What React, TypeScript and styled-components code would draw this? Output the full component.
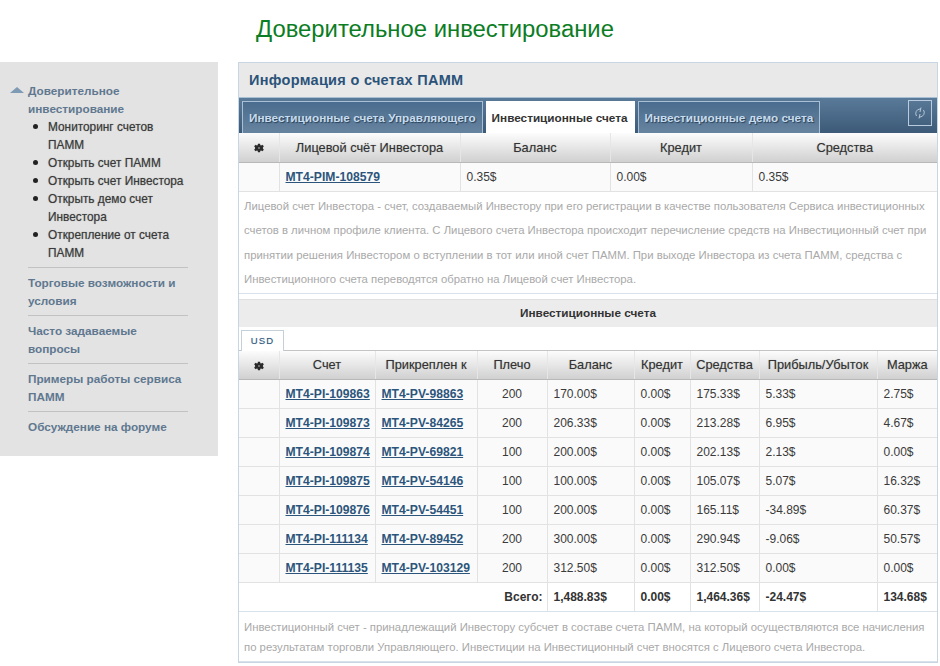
import React from "react";
import styled, { createGlobalStyle } from "styled-components";

const Global = createGlobalStyle`
  html, body { margin: 0; padding: 0; background: #fff; height: 666px; overflow: hidden; }
  body { font-family: "Liberation Sans", Arial, sans-serif; font-size: 12px; color: #333; }
`;
const Page = styled.div`width: 940px; height: 666px; overflow: hidden;`;
const Title = styled.h1`
  margin: 0; height: 62px; padding: 15px 0 0 256px; box-sizing: border-box;
  font-size: 23.85px; line-height: 28px; font-weight: 400; color: #0b7d24;
`;
const Columns = styled.div`display: flex; align-items: flex-start; gap: 20px;`;
const Sidebar = styled.nav`
  width: 218px; height: 394px; box-sizing: border-box; flex: none;
  background: #e3e3e3; padding: 14px 30px 0 28px;
`;
const TopItem = styled.div<{ $last?: boolean }>`
  position: relative; padding: 6px 0 5px;
  border-bottom: ${(p) => (p.$last ? "none" : "1px solid #c2c2c2")};
`;
const TopLabel = styled.div`
  position: relative; font-size: 11.75px; line-height: 18px; font-weight: 700; color: #5f7890;
`;
const Arrow = styled.svg`position: absolute; left: -18px; top: 5px;`;
const SubList = styled.ul`list-style: none; margin: 0; padding: 0 0 0 20px;`;
const SubItem = styled.li`
  position: relative; font-size: 11.85px; line-height: 18px; font-weight: 400; color: #3a3a3a;
  text-shadow: 0 0 1px rgba(0, 0, 0, 0.4);
  &::before {
    content: ""; position: absolute; left: -15px; top: 6px; width: 5px; height: 5px;
    border-radius: 50%; background: #222;
  }
`;
const Panel = styled.main`
  width: 700px; flex: none; box-sizing: border-box; height: 601px;
  border: 1px solid #c8d5e2; background: #fff;
`;
const PanelHead = styled.h2`
  margin: 0; height: 34px; box-sizing: border-box; padding: 9px 0 0 10px; background: #e9e9e9;
  font-size: 14.5px; line-height: 16px; font-weight: 700; color: #2b5379; letter-spacing: 0.3px;
`;
const TabBar = styled.div`
  position: relative; height: 36px; box-sizing: border-box; display: flex; align-items: flex-end;
  gap: 3px; padding-left: 3px;
  background: linear-gradient(#5a7a99, #3c5a78);
  border-top: 1px solid #a9bfd3;
`;
const Tab = styled.div<{ $active?: boolean }>`
  height: 32px; box-sizing: border-box; display: flex; align-items: center;
  font-size: 11.75px; font-weight: 700; white-space: nowrap;
  color: ${(p) => (p.$active ? "#333" : "#c6dcee")};
  background: ${(p) => (p.$active ? "#fff" : "linear-gradient(#4a6c8e, #67849f)")};
  border: ${(p) => (p.$active ? "none" : "1px solid #a9bfd3")};
  border-bottom: none;
  padding: ${(p) => (p.$active ? "0 7px 0 6px" : "0 6px")};
  text-shadow: ${(p) => (p.$active ? "none" : "1px 1px 1px rgba(20, 40, 60, 0.7)")};
`;
const RefreshBox = styled.div`
  position: absolute; right: 5px; top: 2px; width: 24px; height: 26px; box-sizing: border-box;
  border: 1px solid #b9cbdc; display: flex; align-items: center; justify-content: center;
`;
const Table = styled.table`
  width: 698px; table-layout: fixed; border-collapse: collapse; font-size: 12px;
`;
const HeadCell = styled.th`
  height: 29px; padding: 0; box-sizing: border-box; text-align: center; font-weight: 400;
  font-size: 12.8px; color: #333; text-shadow: 0 0 1px rgba(0, 0, 0, 0.3);
  background: linear-gradient(#fcfcfc, #d0d0d0); border-right: 1px solid #e6e6e6;
  border-bottom: 1px solid #b8b8b8; white-space: nowrap;
  &:last-child { border-right: none; }
`;
const Cell = styled.td<{ $center?: boolean }>`
  height: 29px; padding: ${(p) => (p.$center ? "0" : "0 0 0 6px")}; box-sizing: border-box; color: #3a3a3a;
  background: #fafafa; border-right: 1px solid #e2e2e2; border-bottom: 1px solid #e2e2e2;
  text-align: ${(p) => (p.$center ? "center" : "left")}; white-space: nowrap;
  &:last-child { border-right: none; }
`;
const LinkCell = styled(Cell)``;
const AccountLink = styled.a`
  font-size: 12.15px; font-weight: 700; color: #2c557c; text-decoration: underline; cursor: pointer;
`;
const Note = styled.p<{ $h: number; $lh: number; $top: number }>`
  margin: 0; height: ${(p) => p.$h}px; box-sizing: border-box; padding: ${(p) => p.$top}px 5px 0;
  font-size: 11.35px; line-height: ${(p) => p.$lh}px; color: #a9a9a9; background: #fff;
  border-bottom: 1px solid #d9e2ea; white-space: nowrap;
`;
const SectionHead = styled.div`
  margin-top: 5px; height: 28px; box-sizing: border-box; background: #ececec; padding-bottom: 2px;
  border-top: 1px solid #e0e0e0; display: flex; align-items: center; justify-content: center;
  font-size: 11.75px; font-weight: 700; color: #333;
`;
const CurrencyBar = styled.div`
  height: 24px; box-sizing: border-box; display: flex; align-items: flex-end; padding-left: 2px;
  border-bottom: 1px solid #c4c4c4;
`;
const CurrencyTab = styled.div`
  width: 43px; height: 21px; box-sizing: border-box; margin-bottom: -1px; background: #fff;
  border: 1px solid #c4cfd8; border-bottom: none; display: flex; align-items: center; justify-content: center;
  font-size: 9.5px; font-weight: 400; letter-spacing: 1.2px; color: #2c557c;
  text-shadow: 0 0 1px rgba(44, 85, 124, 0.35);
`;
const TotalLabel = styled.td`
  height: 29px; text-align: right; padding: 0 4px 0 0; font-weight: 700; color: #333;
  border-right: 1px solid #e2e2e2; border-bottom: 1px solid #d9e2ea; box-sizing: border-box;
`;
const TotalCell = styled.td`
  height: 29px; padding: 0 0 0 6px; font-weight: 700; color: #333; box-sizing: border-box;
  border-right: 1px solid #e2e2e2; border-bottom: 1px solid #d9e2ea; white-space: nowrap;
  &:last-child { border-right: none; }
`;

const Gear = () => (
  <svg width="10" height="10" viewBox="-2 -2 28 28" fill="#2a2a2a" style={{ verticalAlign: "middle" }}>
    <path fillRule="evenodd" d="M9 0h6l.8 4 2.2 1 3.4-2.2 4.2 4.2L23 10.4v3.2l2.6 3.4-4.2 4.2L18 19l-2.2 1-.8 4H9l-.8-4L6 19l-3.4 2.2-4.2-4.2L1 13.6v-3.2L-1.6 7l4.2-4.2L6 5l2.2-1zM12 10a2 2 0 100 4 2 2 0 000-4z" />
  </svg>
);

const rows = [
  ["MT4-PI-109863", "MT4-PV-98863", "200", "170.00$", "0.00$", "175.33$", "5.33$", "2.75$"],
  ["MT4-PI-109873", "MT4-PV-84265", "200", "206.33$", "0.00$", "213.28$", "6.95$", "4.67$"],
  ["MT4-PI-109874", "MT4-PV-69821", "100", "200.00$", "0.00$", "202.13$", "2.13$", "0.00$"],
  ["MT4-PI-109875", "MT4-PV-54146", "100", "100.00$", "0.00$", "105.07$", "5.07$", "16.32$"],
  ["MT4-PI-109876", "MT4-PV-54451", "100", "200.00$", "0.00$", "165.11$", "-34.89$", "60.37$"],
  ["MT4-PI-111134", "MT4-PV-89452", "200", "300.00$", "0.00$", "290.94$", "-9.06$", "50.57$"],
  ["MT4-PI-111135", "MT4-PV-103129", "200", "312.50$", "0.00$", "312.50$", "0.00$", "0.00$"],
];
const heads = ["Счет", "Прикреплен к", "Плечо", "Баланс", "Кредит", "Средства", "Прибыль/Убыток", "Маржа"];
const widths = [40, 96, 102, 70, 87, 56, 69, 118, 60];
const topWidths = [40, 181, 150, 142, 185];
const subs = ["Мониторинг счетов ПАММ", "Открыть счет ПАММ", "Открыть счет Инвестора", "Открыть демо счет Инвестора", "Открепление от счета ПАММ"];

export default function App() {
  return (
    <Page>
      <Global />
      <Title>Доверительное инвестирование</Title>
      <Columns>
        <Sidebar>
          <TopItem>
            <TopLabel>
              <Arrow width="14" height="6" viewBox="0 0 14 6"><path d="M7 0L14 6H0z" fill="#7f9ab5" /></Arrow>
              Доверительное инвестирование
            </TopLabel>
            <SubList>
              {subs.map((s) => <SubItem key={s}>{s}</SubItem>)}
            </SubList>
          </TopItem>
          <TopItem><TopLabel>Торговые возможности и условия</TopLabel></TopItem>
          <TopItem><TopLabel>Часто задаваемые вопросы</TopLabel></TopItem>
          <TopItem><TopLabel>Примеры работы сервиса ПАММ</TopLabel></TopItem>
          <TopItem $last><TopLabel>Обсуждение на форуме</TopLabel></TopItem>
        </Sidebar>
        <Panel>
          <PanelHead>Информация о счетах ПАММ</PanelHead>
          <TabBar>
            <Tab>Инвестиционные счета Управляющего</Tab>
            <Tab $active>Инвестиционные счета</Tab>
            <Tab>Инвестиционные демо счета</Tab>
            <RefreshBox>
              <svg width="12" height="12" viewBox="0 0 24 24" fill="none" stroke="#b4c6d6" strokeWidth="2">
                <path d="M5 18a9 9 0 0 1 7-14h2M19 6a9 9 0 0 1-7 14h-2M14 1l-2 9M10 23l2-9" />
              </svg>
            </RefreshBox>
          </TabBar>
          <Table>
            <colgroup>{topWidths.map((w, i) => <col key={i} width={w} />)}</colgroup>
            <thead>
              <tr>
                <HeadCell><Gear /></HeadCell>
                <HeadCell>Лицевой счёт Инвестора</HeadCell>
                <HeadCell>Баланс</HeadCell>
                <HeadCell>Кредит</HeadCell>
                <HeadCell>Средства</HeadCell>
              </tr>
            </thead>
            <tbody>
              <tr>
                <Cell />
                <LinkCell><AccountLink>MT4-PIM-108579</AccountLink></LinkCell>
                <Cell>0.35$</Cell>
                <Cell>0.00$</Cell>
                <Cell>0.35$</Cell>
              </tr>
            </tbody>
          </Table>
          <Note $h={102} $lh={24.5} $top={2}>
            Лицевой счет Инвестора - счет, создаваемый Инвестору при его регистрации в качестве пользователя Сервиса инвестиционных<br />
            счетов в личном профиле клиента. С Лицевого счета Инвестора происходит перечисление средств на Инвестиционный счет при<br />
            принятии решения Инвестором о вступлении в тот или иной счет ПАММ. При выходе Инвестора из счета ПАММ, средства с<br />
            Инвестиционного счета переводятся обратно на Лицевой счет Инвестора.
          </Note>
          <SectionHead>Инвестиционные счета</SectionHead>
          <CurrencyBar><CurrencyTab>USD</CurrencyTab></CurrencyBar>
          <Table>
            <colgroup>{widths.map((w, i) => <col key={i} width={w} />)}</colgroup>
            <thead>
              <tr>
                <HeadCell><Gear /></HeadCell>
                {heads.map((h) => <HeadCell key={h}>{h}</HeadCell>)}
              </tr>
            </thead>
            <tbody>
              {rows.map((r) => (
                <tr key={r[0]}>
                  <Cell />
                  <LinkCell><AccountLink>{r[0]}</AccountLink></LinkCell>
                  <LinkCell><AccountLink>{r[1]}</AccountLink></LinkCell>
                  <Cell $center>{r[2]}</Cell>
                  {r.slice(3).map((v, i) => <Cell key={i}>{v}</Cell>)}
                </tr>
              ))}
              <tr>
                <TotalLabel colSpan={4}>Всего:</TotalLabel>
                <TotalCell>1,488.83$</TotalCell>
                <TotalCell>0.00$</TotalCell>
                <TotalCell>1,464.36$</TotalCell>
                <TotalCell>-24.47$</TotalCell>
                <TotalCell>134.68$</TotalCell>
              </tr>
            </tbody>
          </Table>
          <Note $h={50} $lh={20} $top={5}>
            Инвестиционный счет - принадлежащий Инвестору субсчет в составе счета ПАММ, на который осуществляются все начисления<br />
            по результатам торговли Управляющего. Инвестиции на Инвестиционный счет вносятся с Лицевого счета Инвестора.
          </Note>
        </Panel>
      </Columns>
    </Page>
  );
}
